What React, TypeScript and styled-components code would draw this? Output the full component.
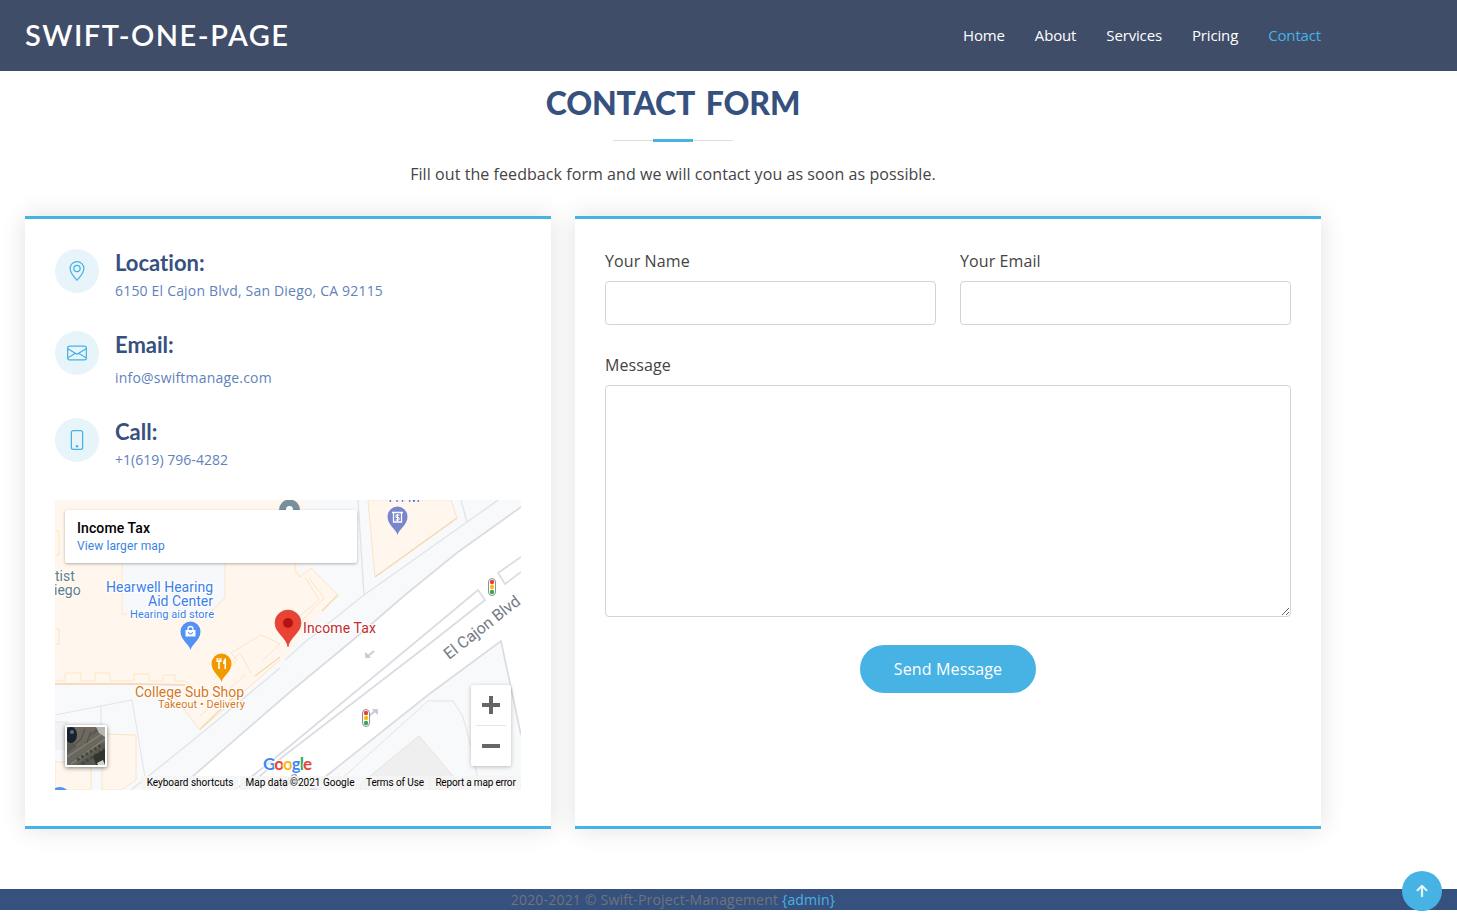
import React from "react";
import styled, { createGlobalStyle } from "styled-components";
import { BsArrowUpShort, BsEnvelope, BsGeoAlt, BsPhone } from "react-icons/bs";

const BLUE = "#47b2e4";
const NAVY = "#37517e";

const GlobalStyle = createGlobalStyle`
  *, *::before, *::after { box-sizing: border-box; }
  body {
    margin: 0;
    background: #fff;
    color: #444;
    font-family: "Open Sans", "Noto Sans", sans-serif;
    font-size: 16px;
    line-height: 24px;
    overflow: hidden;
  }
  h1, h2, h4, p { margin: 0; }
  a { text-decoration: none; }
`;

const Header = styled.header`
  height: 71px;
  background: #3f4d69;
`;

const Container = styled.div`
  width: 1296px;
  margin-left: 25px;
`;

const HeaderInner = styled(Container)`
  height: 69px;
  display: flex;
  align-items: center;
  justify-content: space-between;
`;

const Logo = styled.h1`
  font-family: Lato, sans-serif;
  font-size: 29px;
  line-height: 36px;
  font-weight: 600;
  letter-spacing: 1.5px;
  color: #fff;
`;

const Nav = styled.nav`
  display: flex;
  gap: 30px;
`;

const NavLink = styled.a<{ $active?: boolean }>`
  font-size: 15px;
  letter-spacing: -0.15px;
  color: ${(p) => (p.$active ? BLUE : "#fff")};
`;

const SectionTitle = styled.div`
  display: flex;
  flex-direction: column;
  align-items: center;
  padding-top: 13px;
`;

const Title = styled.h2`
  font-family: Lato, sans-serif;
  font-size: 32px;
  line-height: 38px;
  font-weight: 900;
  letter-spacing: -0.15px;
  word-spacing: 4px;
  color: ${NAVY};
`;

const Divider = styled.div`
  width: 120px;
  height: 3px;
  margin: 17px 0 20px;
  display: flex;
  align-items: center;
  background: linear-gradient(#ddd, #ddd) 0 1px / 100% 1px no-repeat;
  justify-content: center;
  &::after {
    content: "";
    width: 40px;
    height: 3px;
    background: ${BLUE};
  }
`;

const Lead = styled.p`
  letter-spacing: 0.07px;
`;

const Columns = styled.div`
  display: grid;
  grid-template-columns: 526px 746px;
  gap: 24px;
  margin-top: 30px;
`;

const Card = styled.section`
  height: 613px;
  padding: 30px;
  background: #fff;
  border-top: 3px solid ${BLUE};
  border-bottom: 3px solid ${BLUE};
  box-shadow: 0 0 24px rgba(0, 0, 0, 0.12);
`;

const InfoItem = styled.div<{ $height: number }>`
  display: flex;
  gap: 16px;
  height: ${(p) => p.$height}px;
`;

const IconCircle = styled.div`
  width: 44px;
  height: 44px;
  border-radius: 50%;
  background: #e7f5fb;
  color: ${BLUE};
  display: flex;
  align-items: center;
  justify-content: center;
  svg { width: 20px; height: 20px; }
`;

const InfoHeading = styled.h4`
  padding-top: 1px;
  font-family: Lato, sans-serif;
  font-size: 22px;
  line-height: 26px;
  font-weight: 700;
  font-variant-ligatures: none;
  color: ${NAVY};
`;

const InfoText = styled.p<{ $gap: number; $spacing: number }>`
  margin-top: ${(p) => p.$gap}px;
  font-size: 14px;
  line-height: 21px;
  letter-spacing: ${(p) => p.$spacing}px;
  color: #6182ba;
`;

const MapFrame = styled.div`
  position: relative;
  width: 466px;
  height: 290px;
  overflow: hidden;
  font-family: Roboto, sans-serif;
  > svg { display: block; }
`;

const PlaceCard = styled.div`
  position: absolute;
  left: 10px;
  top: 10px;
  width: 292px;
  height: 53px;
  padding: 10px 12px;
  background: #fff;
  border-radius: 2px;
  box-shadow: 0 1px 3px rgba(0, 0, 0, 0.3);
`;

const PlaceName = styled.div`
  font-size: 14px;
  line-height: 17px;
  font-weight: 500;
  letter-spacing: 0.1px;
  color: #000;
`;

const PlaceLink = styled.a`
  display: block;
  font-size: 12px;
  line-height: 19px;
  letter-spacing: 0.1px;
  color: #3a84df;
`;

const Satellite = styled.div`
  position: absolute;
  left: 10px;
  top: 225px;
  width: 42px;
  height: 42px;
  border: 2px solid #fff;
  border-radius: 2px;
  box-shadow: 0 1px 4px rgba(0, 0, 0, 0.5);
  svg { display: block; }
`;

const ZoomBox = styled.div`
  position: absolute;
  left: 416px;
  top: 185px;
  width: 40px;
  height: 81px;
  background: #fff;
  border-radius: 2px;
  box-shadow: 0 1px 4px rgba(0, 0, 0, 0.25);
  display: flex;
  flex-direction: column;
  align-items: center;
`;

const ZoomButton = styled.div`
  flex: 1;
  width: 30px;
  display: flex;
  align-items: center;
  justify-content: center;
  & + & { border-top: 1px solid #e6e6e6; }
`;

const MapCredits = styled.div`
  position: absolute;
  right: 0;
  bottom: 0;
  height: 14px;
  display: flex;
  gap: 1px;
`;

const Credit = styled.span<{ $width: number; $spacing?: number }>`
  width: ${(p) => p.$width}px;
  font-size: 10px;
  line-height: 14px;
  letter-spacing: ${(p) => p.$spacing ?? 0}px;
  color: #000;
  white-space: nowrap;
  text-align: center;
  background: rgba(245, 245, 245, 0.85);
`;

const FieldRow = styled.div`
  display: grid;
  grid-template-columns: 1fr 1fr;
  gap: 24px;
  margin-bottom: 28px;
`;

const Field = styled.label`
  display: block;
`;

const Label = styled.span`
  display: block;
  padding-bottom: 8px;
  letter-spacing: 0.1px;
`;

const Input = styled.input`
  display: block;
  width: 100%;
  height: 44px;
  border: 1px solid #ced4da;
  border-radius: 4px;
  outline: none;
`;

const TextArea = styled.textarea`
  display: block;
  width: 100%;
  height: 232px;
  border: 1px solid #ced4da;
  border-radius: 4px;
  outline: none;
  resize: vertical;
`;

const SendButton = styled.button`
  display: block;
  width: 176px;
  height: 48px;
  margin: 28px auto 0;
  border: 0;
  border-radius: 50px;
  background: ${BLUE};
  color: #fff;
  font: 16px "Open Sans", sans-serif;
  letter-spacing: 0.15px;
`;

const Footer = styled.footer`
  height: 21px;
  margin-top: 60px;
  background: ${NAVY};
`;

const Copyright = styled.p`
  font-size: 14px;
  line-height: 22px;
  letter-spacing: 0.19px;
  text-align: center;
  color: #6c757d;
  a { color: ${BLUE}; }
`;

const BackToTop = styled.a`
  position: fixed;
  left: 1402px;
  top: 871px;
  width: 40px;
  height: 40px;
  border-radius: 50%;
  background: ${BLUE};
  color: #fff;
  display: flex;
  align-items: center;
  justify-content: center;
  svg { width: 24px; height: 24px; stroke: #fff; stroke-width: 0.3px; }
`;

const PIN = "M0 0C-1.500-6-10-10-10-18.500A10 10 0 0 1 10-18.500C10-10 1.500-6 0 0Z";

const TrafficLight = ({ x, y }: { x: number; y: number }) => (
  <g transform={`translate(${x} ${y})`}>
    <rect x="-3.500" y="-8.500" width="7" height="17" rx="3.500" fill="#fff" stroke="#8c9096" />
    <circle cy="-5" r="2.200" fill="#ea4335" />
    <circle r="2.200" fill="#fbbc04" />
    <circle cy="5" r="2.200" fill="#34a853" />
  </g>
);

const StreetMap = () => (
  <svg width="466" height="290" viewBox="0 0 466 290" fontFamily="Roboto, sans-serif">
    <rect width="466" height="290" fill="#f8f9fb" />
    <path
      d="M0 0H250L246 74L256 67L283 95L262 117L230 157L145 230L115 198L130 184L80 185L0 184Z"
      fill="#fff7ee"
    />
    <path d="M67 63H170V98L156 113H67Z" fill="#f6f8fb" />
    <g fill="none" stroke="#fce4c6">
      <path d="M67 63V114H72M170 63V98L152 115M0 31H4V55H1M0 129H4V144H0" />
      <path d="M0 181H10V173H26V181H40V173H55V181H79V174H94V181H108V175H120V181H130L145 195" />
      <path d="M240 62V70L245 77L256 68L283 95M250 77L264 100L240 120M254 78L269 98L235 133M170 172L182 160L176 153L194 142L206 135L225 144L208 160M158 180L185 153L196 173" />
      <path d="M120 198L145 230L225 160M145 216L190 175" />
    </g>
    <path d="M0 184H80L130 185" fill="none" stroke="#f5dcc1" strokeWidth="2" />
    <path d="M145 229L185 191M200 176L225 157M267 111L283 95" stroke="#f7d7ad" strokeWidth="1.300" />
    <path d="M313 0L320 77L402 18L396 0Z" fill="#fff7ee" stroke="#fbe2c4" />
    <path d="M320 77L402 18" stroke="#f5d9b5" strokeWidth="1.500" />
    <path d="M0 222H13V250H0Z" fill="#f1f2f3" />
    <path d="M50 234L81 235V280L66 290H47V234ZM0 262H36V290H0Z" fill="#fff7ee" stroke="#fce4c6" />
    <g fill="none" stroke="#e2e4e7">
      <path d="M303 0L309 95M406 0L412 22M466-16L412 22L309 95L250 142L230 160M225 168L153 228L85 283L76 290" strokeWidth="1.400" />
      <path d="M0 215L77 200L90 277M46 205V227M0 222H13" />
    </g>
    <path
      d="M466 7L403 52L350 95L298 140L235 192L152 264L122 290H255L270 277L373 195L446 141L466 235V290H466Z"
      fill="#fff"
    />
    <path d="M446 141L466 128V235Z" fill="#fff" />
    <path d="M255 290L270 277L373 195L446 141L466 235V290Z" fill="#f8f9fb" />
    <g fill="none" stroke="#dadce1" strokeWidth="1.700">
      <path d="M466 7L403 52L350 95L298 140L235 192L152 264L122 290" />
      <path d="M253 290L270 277L373 195L446 141L466 235" />
      <path d="M180 290L230 250L357 145L423 90L430 100L373 145L230 255L188 290" />
      <path d="M466 57L443 73L450 84L466 72" />
    </g>
    <path d="M466 8V140L446 141Z" fill="none" />
    <path d="M274 290L373 201H398L408 217L417 250L425 290" fill="none" stroke="#e2e3e6" />
    <path d="M364 236L410 290H298Z" fill="#efefef" stroke="#e3e3e3" />

    <g fill="#c7cad9" stroke="#c7cad9" strokeWidth="1.800">
      <path d="M319 151L313 156" />
      <path d="M310.500 152.500V157.500H315.500Z" strokeWidth=".8" />
      <path d="M314 216L320 211" />
      <path d="M317.500 209.500H322.500V214.500Z" strokeWidth=".8" />
    </g>
    <TrafficLight x={437} y={87} />
    <TrafficLight x={311} y={218} />

    <g stroke="#fff" strokeWidth="2" paintOrder="stroke" strokeLinejoin="round">
      <g fill="#5f7d87" fontSize="14">
        <text x="0" y="81">tist</text>
        <text x="-1" y="95">iego</text>
      </g>
      <g fill="#3b7de9">
        <text x="51" y="92" fontSize="14" textLength="107">Hearwell Hearing</text>
        <text x="93" y="106" fontSize="14" textLength="65">Aid Center</text>
        <text x="75" y="118" fontSize="11" textLength="84">Hearing aid store</text>
      </g>
      <text x="334" y="2" fontSize="14" fill="#5c6bc0" textLength="31">ATM</text>
      <g fill="#d5771b">
        <text x="80" y="197" fontSize="14" textLength="109">College Sub Shop</text>
        <text x="103" y="208" fontSize="11" textLength="87">Takeout • Delivery</text>
      </g>
      <text x="248" y="133" fontSize="14" fill="#c32b2b" textLength="73">Income Tax</text>
      <text transform="translate(394 160) rotate(-38)" fontSize="16" fill="#757b84" textLength="92">
        El Cajon Blvd
      </text>
      <text transform="translate(222 295) rotate(-35)" fontSize="15" fill="#9a9ea5">
        Blvd
      </text>
    </g>

    <path d="M224 12V10A10.500 10.500 0 0 1 245 10V12Z" fill="#78909c" />
    <circle cx="234.500" cy="9.500" r="3.500" fill="#fff" />
    <g transform="translate(135.500 150)">
      <path d={PIN} fill="#5491f5" />
      <path d="M-5-20H5V-13.500H-5Z" fill="#fff" />
      <path d="M-2.500-20V-21A2.500 2.500 0 0 1 2.500-21V-20" fill="none" stroke="#fff" strokeWidth="1.300" />
      <path d="M-2-18A2 2 0 0 0 2-18" fill="none" stroke="#5491f5" />
    </g>
    <g transform="translate(166.500 182)">
      <path d={PIN} fill="#f29900" />
      <path d="M-5-24V-20H0V-24H-1.200V-21.500H-2V-24H-3V-21.500H-3.800V-24ZM-3.300-20V-13H-1.700V-20ZM4.500-24Q1.500-23 1.500-18H3V-13H4.500Z" fill="#fff" />
    </g>
    <g transform="translate(342.500 35)">
      <path d={PIN} fill="#7986cb" />
      <path d="M-5.500-22.500H5.500M-4-22V-13H4V-22" fill="none" stroke="#fff" strokeWidth="1.300" />
      <path d="M2-20H-1.500V-17.500H1.500V-15H-2M0-21V-14" fill="none" stroke="#fff" />
    </g>
    <path
      d="M233 147C231.500 137 220 133 220 123A13 13 0 0 1 246 123C246 133 234.500 137 233 147Z"
      fill="#ea4335"
      stroke="#d23b2e"
      strokeWidth=".6"
    />
    <circle cx="233" cy="123" r="5" fill="#b31412" />
    <circle cx="5" cy="297" r="10" fill="#5491f5" />
    <circle cx="259" cy="298" r="10" fill="#5491f5" />

    <text
      x="208"
      y="270"
      fontFamily="Lato, sans-serif"
      fontSize="17"
      fontWeight="700"
      textLength="49"
      stroke="#fff"
      strokeWidth="2"
      paintOrder="stroke"
    >
      <tspan fill="#4285f4">G</tspan>
      <tspan fill="#ea4335">o</tspan>
      <tspan fill="#fbbc04">o</tspan>
      <tspan fill="#4285f4">g</tspan>
      <tspan fill="#34a853">l</tspan>
      <tspan fill="#ea4335">e</tspan>
    </text>
  </svg>
);

const SatelliteImage = () => (
  <svg width="38" height="38" viewBox="0 0 38 38">
    <rect width="38" height="38" fill="#5b5a52" />
    <path d="M0 27L16 14L38 0V16L9 38H0Z" fill="#69675d" />
    <path d="M8 0H30L22 10L10 20L5 15Z" fill="#716960" />
    <path d="M0 30L18 18L38 5M4 37L38 12" stroke="#85837a" strokeWidth="1.200" />
    <path d="M0 24L14 12L18 2M20 16L24 4" stroke="#55564e" strokeWidth="1.500" fill="none" />
    <path d="M10 33L36 17M15 37L38 22" stroke="#44483c" strokeWidth="3" strokeDasharray="3 2" />
    <ellipse cx="4" cy="8" rx="6" ry="8" fill="#18212d" />
    <circle cx="5" cy="5" r="2" fill="#526f86" />
    <path d="M29 0H38V10L32 6Z" fill="#b9b7b2" />
    <path d="M26 29L38 22V38H29Z" fill="#30342e" />
    <path d="M30 36L36 33L38 38H31Z" fill="#d2d2cc" />
  </svg>
);

const LINKS = ["Home", "About", "Services", "Pricing", "Contact"];

const INFO = [
  { title: "Location:", text: "6150 El Cajon Blvd, San Diego, CA 92115", Icon: BsGeoAlt, height: 82, gap: 4, spacing: 0.19 },
  { title: "Email:", text: "info@swiftmanage.com", Icon: BsEnvelope, height: 87, gap: 9, spacing: 0.2 },
  { title: "Call:", text: "+1(619) 796-4282", Icon: BsPhone, height: 82, gap: 4, spacing: 0.04 },
];

export default function App() {
  return (
    <>
      <GlobalStyle />
      <Header>
        <HeaderInner>
          <Logo>SWIFT-ONE-PAGE</Logo>
          <Nav>
            {LINKS.map((name) => (
              <NavLink key={name} $active={name === "Contact"}>{name}</NavLink>
            ))}
          </Nav>
        </HeaderInner>
      </Header>
      <Container>
        <SectionTitle>
          <Title>CONTACT FORM</Title>
          <Divider />
          <Lead>Fill out the feedback form and we will contact you as soon as possible.</Lead>
        </SectionTitle>
        <Columns>
          <Card>
            {INFO.map(({ title, text, Icon, height, gap, spacing }) => (
              <InfoItem key={title} $height={height}>
                <IconCircle><Icon /></IconCircle>
                <div>
                  <InfoHeading>{title}</InfoHeading>
                  <InfoText $gap={gap} $spacing={spacing}>{text}</InfoText>
                </div>
              </InfoItem>
            ))}
            <MapFrame>
              <StreetMap />
              <PlaceCard>
                <PlaceName>Income Tax</PlaceName>
                <PlaceLink>View larger map</PlaceLink>
              </PlaceCard>
              <Satellite><SatelliteImage /></Satellite>
              <ZoomBox>
                <ZoomButton>
                  <svg width="18" height="18"><path d="M0 9H18M9 0V18" stroke="#666" strokeWidth="4" /></svg>
                </ZoomButton>
                <ZoomButton>
                  <svg width="18" height="4"><path d="M0 2H18" stroke="#666" strokeWidth="4" /></svg>
                </ZoomButton>
              </ZoomBox>
              <MapCredits>
                <Credit $width={98}>Keyboard shortcuts</Credit>
                <Credit $width={120}>Map data ©2021 Google</Credit>
                <Credit $width={68} $spacing={-0.1}>Terms of Use</Credit>
                <Credit $width={91} $spacing={-0.18}>Report a map error</Credit>
              </MapCredits>
            </MapFrame>
          </Card>
          <Card>
            <FieldRow>
              <Field><Label>Your Name</Label><Input /></Field>
              <Field><Label>Your Email</Label><Input /></Field>
            </FieldRow>
            <Field><Label>Message</Label><TextArea /></Field>
            <SendButton>Send Message</SendButton>
          </Card>
        </Columns>
      </Container>
      <Footer>
        <Container>
          <Copyright>2020-2021 © Swift-Project-Management <a>{"{admin}"}</a></Copyright>
        </Container>
      </Footer>
      <BackToTop><BsArrowUpShort /></BackToTop>
    </>
  );
}
